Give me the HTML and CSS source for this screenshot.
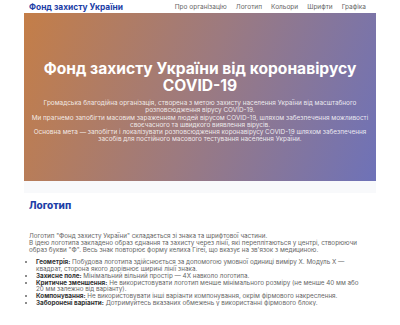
FILE: index.html
```html
<!DOCTYPE html>
<html lang="uk">
<head>
  <meta charset="UTF-8">
  <meta name="viewport" content="width=device-width, initial-scale=1.0">
  <title>Фонд захисту України</title>
  <link rel="stylesheet" href="styles.css">
</head>
<body>
<div class="page">
  <header class="header">
    <div class="brand">Фонд захисту України</div>
    <nav class="nav">
      <a href="#">Про організацію</a>
      <a href="#">Логотип</a>
      <a href="#">Кольори</a>
      <a href="#">Шрифти</a>
      <a href="#">Графіка</a>
    </nav>
  </header>
  <section class="hero">
    <h1>Фонд захисту України від коронавірусу COVID-19</h1>
    <p>Громадська благодійна організація, створена з метою захисту населення України від масштабного розповсюдження вірусу COVID-19.<br>
      Ми прагнемо запобігти масовим зараженням людей вірусом COVID-19, шляхом забезпечення можливості своєчасного та швидкого виявлення вірусів.<br>
      Основна мета — запобігти і локалізувати розповсюдження коронавірусу COVID-19 шляхом забезпечення засобів для постійного масового тестування населення України.</p>
  </section>
  <div class="strip"></div>
  <section class="logo">
    <h2>Логотип</h2>
    <p>Логотип "Фонд захисту України" складається зі знака та шрифтової частини.<br>
      В ідею логотипа закладено образ єднання та захисту через лінії, які переплітаються у центрі, створюючи образ букви "Ф". Весь знак повторює форму келиха Гігеї, що вказує на зв'язок з медициною.</p>
    <ul>
      <li><b>Геометрія:</b> Побудова логотипа здійснюється за допомогою умовної одиниці виміру X. Модуль X — квадрат, сторона якого дорівнює ширині лінії знака.</li>
      <li><b>Захисне поле:</b> Мінімальний вільний простір — 4X навколо логотипа.</li>
      <li><b>Критичне зменшення:</b> Не використовувати логотип менше мінімального розміру (не менше 40 мм або 20 мм залежно від варіанту).</li>
      <li><b>Компонування:</b> Не використовувати інші варіанти компонування, окрім фірмового накреслення.</li>
      <li><b>Заборонені варіанти:</b> Дотримуйтесь вказаних обмежень у використанні фірмового блоку.</li>
    </ul>
  </section>
</div>
</body>
</html>
```

FILE: styles.css
```css
body {
  margin: 0;
  font-family: Inter, "Open Sans", sans-serif;
  background-color: #ffffff;
  color: #666666;
}
.page {
  width: 352px;
  margin: 0 auto;
}
.header {
  display: flex;
  justify-content: space-between;
  align-items: center;
  height: 13px;
  padding: 0 10px 0 5px;
}
.brand {
  font-size: 8.4px;
  font-weight: 700;
  color: #1c3ea6;
}
.nav {
  display: flex;
  gap: 9px;
}
.nav a {
  font-size: 6.5px;
  color: #666666;
  text-decoration: none;
}
.hero {
  height: 168px;
  box-sizing: border-box;
  padding: 47px 4px 0;
  background: linear-gradient(110deg, #c47e48 0%, #9c7a80 50%, #6e72b8 100%);
  color: #ffffff;
  text-align: center;
}
.hero h1 {
  margin: 0 0 6px;
  font-size: 15.6px;
  line-height: 17px;
  font-weight: 700;
}
.hero p {
  margin: 0 auto;
  max-width: 342px;
  font-size: 6.4px;
  line-height: 7.3px;
  color: rgba(255, 255, 255, 0.85);
}
.strip {
  height: 12px;
  background-color: #f8f9fb;
}
.logo {
  padding: 6px 5px 0;
}
.logo h2 {
  margin: 0 0 22px;
  font-size: 10px;
  line-height: 12px;
  font-weight: 800;
  color: #1e3fa8;
}
.logo p {
  margin: 0 0 6px;
  max-width: 338px;
  font-size: 6.3px;
  line-height: 6.8px;
}
.logo ul {
  margin: 0;
  padding-left: 7px;
  max-width: 330px;
  font-size: 6.3px;
  line-height: 6.7px;
}
.logo b {
  display: inline-block;
  line-height: 6.7px;
  color: #333333;
}
```
